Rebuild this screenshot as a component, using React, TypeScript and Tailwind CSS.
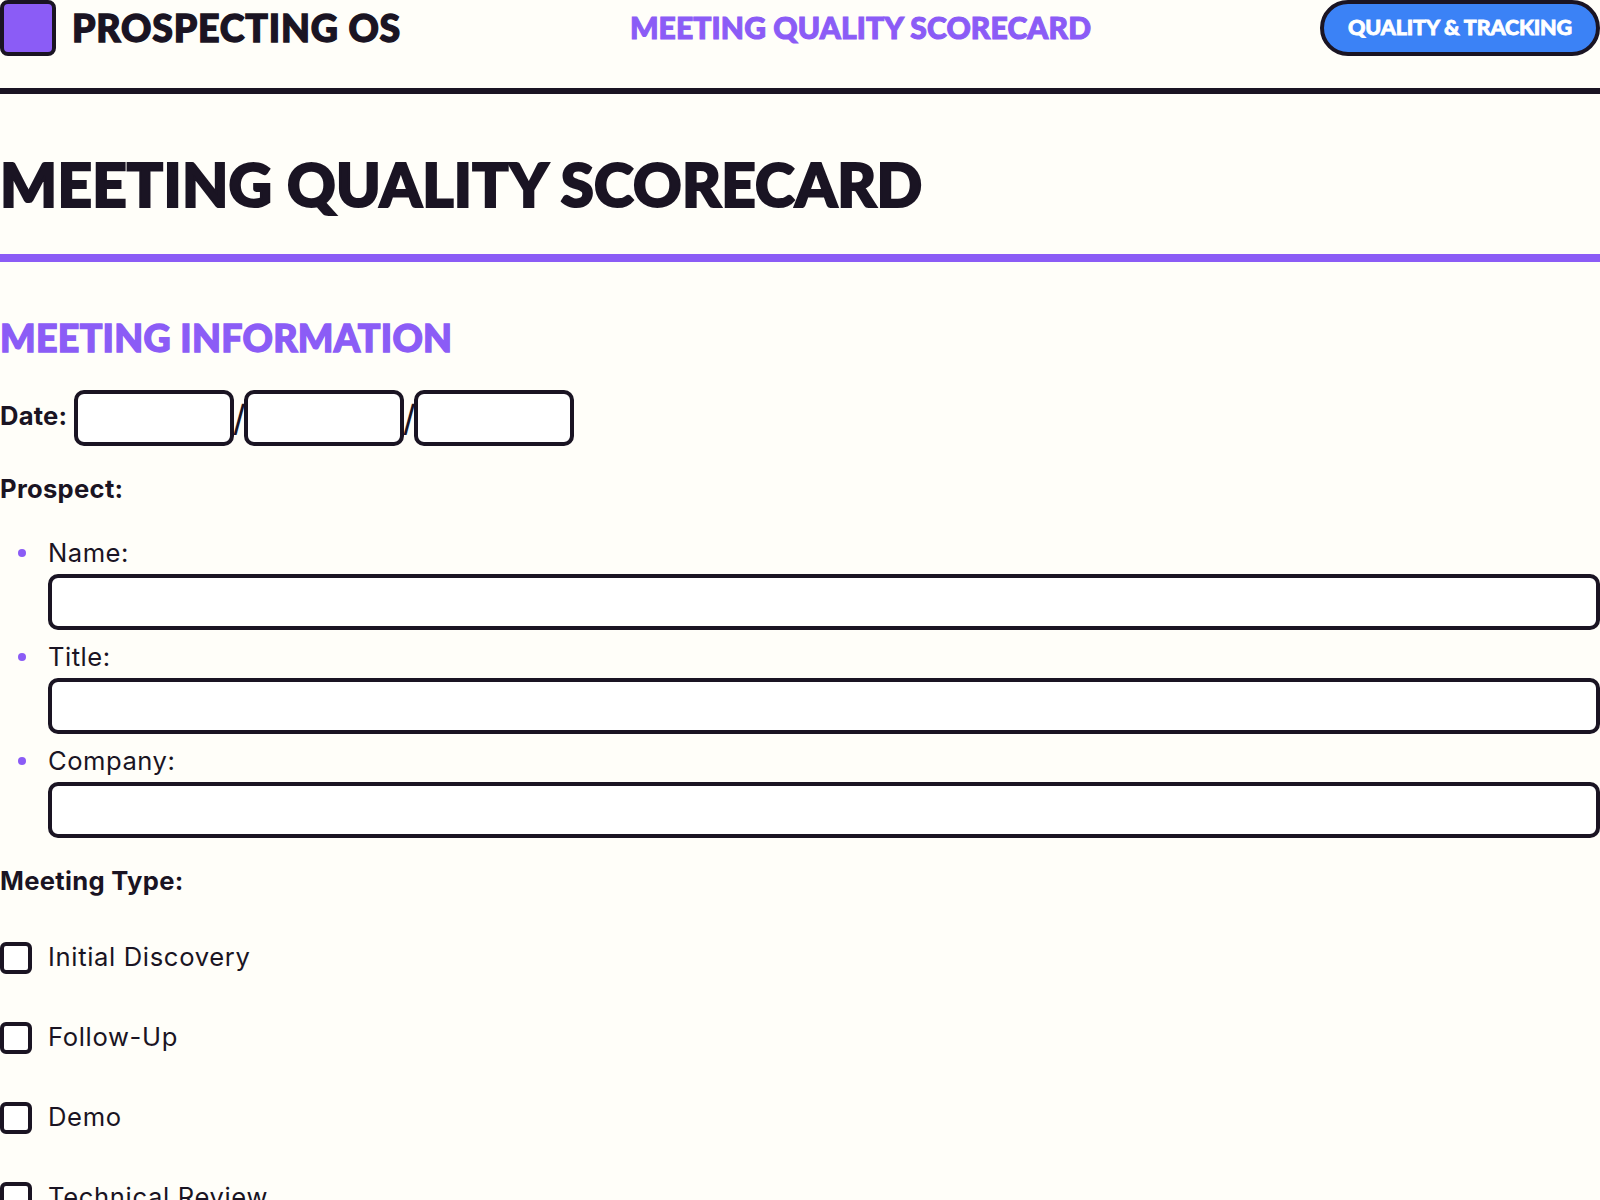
const heading = "font-['Lato','Inter',sans-serif] font-black uppercase [-webkit-text-stroke:0.036em_currentColor]";
const body = "font-['Inter','Noto_Sans',sans-serif]";
const boxBorder = "border-[4px] border-[#1a1423] rounded-[10px] bg-white";

function Field({ label }: { label: string }) {
  return (
    <li className="flex items-start">
      <span className="w-[48px] shrink-0 flex justify-end pr-[22px] pt-[11px]">
        <span className="block w-[8px] h-[8px] rounded-full bg-[#8b5cf6]" />
      </span>
      <div className="flex-1">
        <div className="h-[29px] text-[25.6px] leading-[29px] tracking-[0.5px]">{label}</div>
        <div className={`h-[56px] mt-[7px] mb-[12px] ${boxBorder}`} />
      </div>
    </li>
  );
}

function Check({ label }: { label: string }) {
  return (
    <div className="flex items-center h-[32px] mb-[48px]">
      <span className="block w-[32px] h-[32px] border-[4px] border-[#1a1423] rounded-[6px] bg-white shrink-0" />
      <span className="ml-[16px] -mt-[2px] text-[25.6px] tracking-[0.65px]">{label}</span>
    </div>
  );
}

function Slash() {
  return <span className="w-[10px] flex justify-center text-[36px] font-normal leading-none">/</span>;
}

export default function App() {
  return (
    <div className={`w-[1600px] h-[1200px] overflow-hidden bg-[#fffef9] text-[#1a1423] ${body}`}>
      <header className="flex items-center justify-between h-[94px] pb-[32px] border-b-[6px] border-[#1a1423]">
        <div className="flex items-center gap-[16px]">
          <div className="w-[56px] h-[56px] rounded-lg border-[4px] border-[#1a1423] bg-[#8b5cf6]" />
          <div className={`${heading} text-[37.5px] leading-[40px] tracking-[0.8px]`}>Prospecting OS</div>
        </div>
        <div className={`${heading} text-[30px] leading-[32px] -mt-[2px] text-[#8b5cf6] tracking-[0.15px]`}>Meeting Quality Scorecard</div>
        <div className={`${heading} w-[280px] h-[56px] flex items-center justify-center rounded-full border-[4px] border-[#1a1423] bg-[#3b82f6] text-white text-[21.5px] leading-[24px] pb-[2px] tracking-[-0.15px]`}>Quality &amp; Tracking</div>
      </header>

      <h1 className={`${heading} text-[60px] leading-[64px] mt-[58px] pb-[38px] border-b-[8px] border-[#8b5cf6] tracking-[0.3px]`}>Meeting Quality Scorecard</h1>

      <h2 className={`${heading} text-[37.5px] leading-[40px] text-[#8b5cf6] mt-[56px] tracking-[0.3px]`}>Meeting Information</h2>

      <div className="flex items-center mt-[32px] h-[56px]">
        <span className="font-bold text-[25.6px] mr-[7px] -mt-[4px] tracking-[0.2px]">Date:</span>
        <div className={`w-[160px] h-[56px] ${boxBorder}`} />
        <Slash />
        <div className={`w-[160px] h-[56px] ${boxBorder}`} />
        <Slash />
        <div className={`w-[160px] h-[56px] ${boxBorder}`} />
      </div>

      <div className="font-bold text-[25.6px] leading-[32px] mt-[27px] tracking-[0.3px]">Prospect:</div>

      <ul className="mt-[33px]">
        <Field label="Name:" />
        <Field label="Title:" />
        <Field label="Company:" />
      </ul>

      <div className="font-bold text-[25.6px] leading-[32px] mt-[15px] tracking-[0.3px]">Meeting Type:</div>

      <div className="mt-[45px]">
        <Check label="Initial Discovery" />
        <Check label="Follow-Up" />
        <Check label="Demo" />
        <Check label="Technical Review" />
      </div>
    </div>
  );
}
